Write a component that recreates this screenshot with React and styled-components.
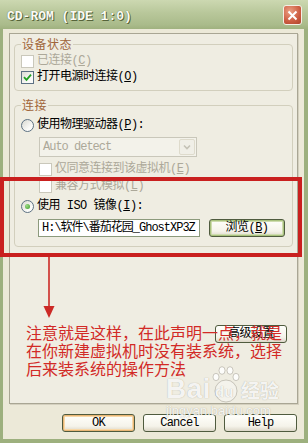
import React from 'react';
import styled, { createGlobalStyle } from 'styled-components';

const GlobalStyle = createGlobalStyle`
  html, body {
    margin: 0;
    padding: 0;
    background: #ece9d8;
  }
`;

const cjk = '"Noto Sans CJK SC", "Noto Sans", sans-serif';
const ui = '"Liberation Mono", "Noto Sans CJK SC", monospace';

const Screen = styled.div`
  position: relative;
  width: 308px;
  height: 443px;
  overflow: hidden;
`;

const Window = styled.div`
  display: flex;
  flex-direction: column;
  width: 308px;
  height: 443px;
  background: #9db07e;
`;

const TitleBar = styled.div`
  flex: none;
  height: 29px;
  box-sizing: border-box;
  padding: 1px 6px 0 7px;
  display: flex;
  align-items: center;
  justify-content: space-between;
  background: linear-gradient(#ccd8b1, #b8c79a 45%, #aabb8b 85%, #9fb17f);
`;

const Title = styled.span`
  font: bold 13px ${ui};
  color: #fbfbf4;
  text-shadow: 1px 1px 0 #56643a, 0 0 1px #56643a;
  padding-top: 2px;
`;

const CloseButton = styled.div`
  width: 19px;
  height: 20px;
  box-sizing: border-box;
  border: 1px solid #f4efe6;
  border-radius: 3px;
  display: flex;
  align-items: center;
  justify-content: center;
  background: radial-gradient(circle at 35% 30%, #eba084, #cc5b40 60%, #ad432c);
`;

const Body = styled.div`
  flex: 1;
  display: flex;
  flex-direction: column;
  margin: 0 4px 4px 3px;
  padding: 4px 6px 7px 6px;
  background: #ece9d8;
`;

const Pane = styled.div`
  flex: 1;
  box-sizing: border-box;
  border: 1px solid #a9a694;
  box-shadow: 1px 1px 0 #d4d0bf;
  padding: 3px 4px 0 4px;
  background: #efede2;
  display: flex;
  flex-direction: column;
`;

const Group = styled.fieldset`
  margin: ${({ gap }) => gap || 0}px 0 0;
  padding: ${({ top }) => top}px 6px ${({ bottom }) => bottom}px 6px;
  min-width: 0;
  border: 1px solid #d2cfbd;
  border-radius: 4px;
`;

const Legend = styled.legend`
  padding: 0 1px;
  font: 12px/14px ${cjk};
  letter-spacing: 0.5px;
  color: #a0653a;
`;

const Row = styled.div`
  display: flex;
  align-items: center;
  gap: ${({ gap }) => (gap === undefined ? 3 : gap)}px;
  height: ${({ h }) => h || 16}px;
  margin-top: ${({ mt }) => mt || 0}px;
  padding-left: ${({ indent }) => indent || 0}px;
`;

const Label = styled.span`
  font: 12px/16px ${ui};
  letter-spacing: -0.5px;
  color: ${({ disabled }) => (disabled ? '#aca899' : '#000')};
  white-space: nowrap;
`;

const Box = styled.span`
  flex: none;
  width: 13px;
  height: 13px;
  box-sizing: border-box;
  border: 1px solid ${({ disabled }) => (disabled ? '#cac8bb' : '#5d7183')};
  background: ${({ disabled }) =>
    disabled ? '#fff' : 'linear-gradient(135deg, #dcdcd4, #fafaf8 70%)'};
  display: flex;
  align-items: center;
  justify-content: center;
`;

const Radio = styled.span`
  flex: none;
  width: 13px;
  height: 13px;
  box-sizing: border-box;
  border-radius: 50%;
  border: 1px solid #5d7183;
  background: linear-gradient(135deg, #d8d8d0, #fbfbf9 70%);
  display: flex;
  align-items: center;
  justify-content: center;
`;

const Dot = styled.span`
  width: 5px;
  height: 5px;
  border-radius: 50%;
  background: radial-gradient(circle at 35% 35%, #9ddc86, #3d9a2c);
`;

const Select = styled.div`
  width: 158px;
  height: 20px;
  margin-top: 4px;
  margin-left: 18px;
  box-sizing: border-box;
  border: 1px solid #c9c7ba;
  background: #f3f2ea;
  display: flex;
  align-items: center;
  justify-content: space-between;
  padding: 0 1px 0 3px;
`;

const SelectText = styled.span`
  font: 12px ${ui};
  letter-spacing: -1px;
  color: #aca899;
`;

const SelectArrow = styled.span`
  width: 16px;
  height: 16px;
  box-sizing: border-box;
  border: 1px solid #dedbcc;
  border-radius: 2px;
  background: #f0efe7;
  display: flex;
  align-items: center;
  justify-content: center;
`;

const TextInput = styled.div`
  width: 162px;
  height: 18px;
  box-sizing: border-box;
  border: 1px solid #8c9a7c;
  background: #fff;
  padding: 0 3px;
  font: 12px/16px ${ui};
  letter-spacing: -1px;
  white-space: nowrap;
  overflow: hidden;
`;

const Button = styled.div`
  flex: none;
  width: ${({ w }) => w}px;
  height: 18px;
  box-sizing: border-box;
  border: 1px solid #4f5b3e;
  border-radius: 3px;
  background: linear-gradient(#fffffb, #f5f3ea 70%, #dcd7c8);
  box-shadow: ${({ variant }) =>
    variant === 'default'
      ? 'inset 0 0 0 1px #e9b676, inset 0 0 0 2px #f8d9a8'
      : variant === 'hot'
      ? 'inset 0 0 0 1px #a9c27e, inset 0 0 0 2px #cfdcb0'
      : 'none'};
  display: flex;
  align-items: center;
  justify-content: center;
  font: 12px/16px ${ui};
  letter-spacing: ${({ latin }) => (latin ? '-0.8px' : '-0.5px')};
  color: #000;
`;

const AdvancedRow = styled.div`
  display: flex;
  justify-content: flex-end;
  padding-right: 6px;
  margin-top: 78px;
`;

const ButtonRow = styled.div`
  flex: none;
  display: flex;
  justify-content: flex-end;
  gap: 8px;
  margin-top: 10px;
  padding-right: 1px;
`;

const RedFrame = styled.div`
  position: absolute;
  left: 0;
  top: 177px;
  width: 302px;
  height: 80px;
  box-sizing: border-box;
  border: 4px solid #c9201f;
  pointer-events: none;
`;

const Arrow = styled.svg`
  position: absolute;
  left: 42px;
  top: 257px;
`;

const Note = styled.div`
  position: absolute;
  left: 26px;
  top: 323px;
  font: 16px/18px ${cjk};
  color: #d22a26;
  white-space: nowrap;
`;

const Watermark = styled.div`
  position: absolute;
  left: 166px;
  top: 366px;
  display: flex;
  flex-direction: column;
  align-items: flex-start;
  pointer-events: none;
  color: rgba(255, 255, 255, 0.88);
  text-shadow: 0 0 1px rgba(110, 105, 90, 0.55);
`;

const WmTop = styled.div`
  display: flex;
  align-items: flex-end;
  height: 37px;
`;

const WmBai = styled.span`
  font: bold 28px/28px "Liberation Sans", sans-serif;
  letter-spacing: 0.5px;
`;

const Paw = styled.span`
  position: relative;
  width: 28px;
  height: 37px;
  margin: 0 1px;
`;

const PawText = styled.span`
  position: absolute;
  left: 3px;
  bottom: 4px;
  font: bold 15px/15px "Liberation Sans", sans-serif;
`;

const WmCn = styled.span`
  font: bold 19px/24px ${cjk};
  margin-bottom: 1px;
`;

const WmUrl = styled.span`
  font: 13px/14px "Liberation Sans", sans-serif;
  margin-top: 1px;
`;

const Check = () => (
  <svg width="9" height="9" viewBox="0 0 9 9">
    <path d="M1 4.2 L3.5 6.8 L8 1.6" fill="none" stroke="#21a121" strokeWidth="1.8" />
  </svg>
);

const CheckBox = ({ checked, disabled, children }) => (
  <>
    <Box disabled={disabled}>{checked && <Check />}</Box>
    <Label disabled={disabled}>{children}</Label>
  </>
);

const App = () => (
  <Screen>
    <GlobalStyle />
    <Window>
      <TitleBar>
        <Title>CD-ROM (IDE 1:0)</Title>
        <CloseButton>
          <svg width="11" height="11" viewBox="0 0 11 11">
            <path d="M1.5 1.5 L9.5 9.5 M9.5 1.5 L1.5 9.5" stroke="#fff" strokeWidth="2" />
          </svg>
        </CloseButton>
      </TitleBar>

      <Body>
        <Pane>
          <Group top={2} bottom={5}>
            <Legend>设备状态</Legend>
            <Row>
              <CheckBox disabled>
                已连接(<u>C</u>)
              </CheckBox>
            </Row>
            <Row>
              <CheckBox checked>
                打开电源时连接(<u>O</u>)
              </CheckBox>
            </Row>
          </Group>

          <Group gap={7} top={5} bottom={9}>
            <Legend>连接</Legend>
            <Row>
              <Radio />
              <Label>
                使用物理驱动器(<u>P</u>):
              </Label>
            </Row>
            <Select>
              <SelectText>Auto detect</SelectText>
              <SelectArrow>
                <svg width="8" height="6" viewBox="0 0 8 6">
                  <path d="M1 1.5 L4 4.5 L7 1.5" fill="none" stroke="#c4c2b6" strokeWidth="1.6" />
                </svg>
              </SelectArrow>
            </Select>
            <Row mt={4} indent={18}>
              <CheckBox disabled>
                仅同意连接到该虚拟机(<u>E</u>)
              </CheckBox>
            </Row>
            <Row mt={1} indent={18}>
              <CheckBox disabled>
                兼容方式模拟(<u>L</u>)
              </CheckBox>
            </Row>
            <Row mt={4}>
              <Radio>
                <Dot />
              </Radio>
              <Label>
                使用 ISO 镜像(<u>I</u>):
              </Label>
            </Row>
            <Row mt={5} h={18} indent={17} gap={9}>
              <TextInput>H:\软件\番茄花园_GhostXP3Z</TextInput>
              <Button w={76} variant="hot">
                浏览(<u>B</u>)
              </Button>
            </Row>
          </Group>

          <AdvancedRow>
            <Button w={72}>高级设置</Button>
          </AdvancedRow>
        </Pane>

        <ButtonRow>
          <Button w={73} variant="default" latin>
            OK
          </Button>
          <Button w={73} latin>
            Cancel
          </Button>
          <Button w={73} latin>
            Help
          </Button>
        </ButtonRow>
      </Body>
    </Window>

    <RedFrame />
    <Arrow width="14" height="62" viewBox="0 0 14 62">
      <line x1="7" y1="0" x2="7" y2="50" stroke="#cc2a26" strokeWidth="1.6" />
      <polygon points="1.5,49 12.5,49 7,61" fill="#cc2a26" />
    </Arrow>
    <Note>
      <div>注意就是这样，在此声明一点，就是</div>
      <div>在你新建虚拟机时没有装系统，选择</div>
      <div>后来装系统的操作方法</div>
    </Note>

    <Watermark>
      <WmTop>
        <WmBai>Bai</WmBai>
        <Paw>
          <svg width="28" height="37" viewBox="0 0 28 37">
            <g fill="rgba(255,255,255,0.85)" stroke="rgba(120,115,100,0.45)" strokeWidth="0.8">
              <ellipse cx="4" cy="11" rx="3" ry="3.6" />
              <ellipse cx="10" cy="4.5" rx="3" ry="3.8" />
              <ellipse cx="18" cy="4.5" rx="3" ry="3.8" />
              <ellipse cx="24" cy="11" rx="3" ry="3.6" />
              <circle cx="14" cy="25" r="11" fill="rgba(255,255,255,0.35)" />
            </g>
          </svg>
          <PawText>du</PawText>
        </Paw>
        <WmCn>经验</WmCn>
      </WmTop>
      <WmUrl>jingyan.baidu.com</WmUrl>
    </Watermark>
  </Screen>
);

export default App;
